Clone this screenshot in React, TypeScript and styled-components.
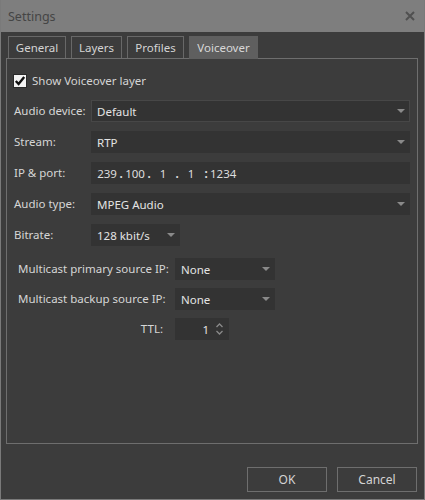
import styled, { createGlobalStyle } from "styled-components";

const GlobalStyle = createGlobalStyle`
    html, body {
        margin: 0;
        padding: 0;
        background: #3c3c3c;
    }
    * {
        box-sizing: border-box;
    }
`;

const Window = styled.div`
    width: 425px;
    height: 500px;
    display: flex;
    flex-direction: column;
    background: #3c3c3c;
    border: 1px solid #7a7a7a;
    border-top: none;
    font-family: "Noto Sans", "Open Sans", sans-serif;
    font-size: 11.5px;
    color: #d4d4d4;
`;

const TitleBar = styled.div`
    height: 32px;
    flex-shrink: 0;
    display: flex;
    align-items: center;
    justify-content: space-between;
    padding: 0 8px 0 7px;
    background: #7e7e7e;
    color: #454545;
    font-size: 12.5px;
`;

const CloseButton = styled.svg`
    width: 10px;
    height: 10px;
    margin-right: 1px;
`;

const Body = styled.div`
    flex: 1;
    display: flex;
    flex-direction: column;
    padding: 4px 5px 0 5px;
`;

const TabStrip = styled.div`
    display: flex;
    gap: 5px;
    padding-left: 2px;
    height: 22px;
    position: relative;
    z-index: 1;
`;

const Tab = styled.div<{ $active?: boolean; $width: number }>`
    height: ${(p) => (p.$active ? "23px" : "22px")};
    display: flex;
    align-items: center;
    justify-content: center;
    width: ${(p) => p.$width}px;
    background: ${(p) => (p.$active ? "#5f5f5f" : "#3c3c3c")};
    border: ${(p) => (p.$active ? "none" : "1px solid #686868")};
    border-bottom: none;
    color: ${(p) => (p.$active ? "#d8d8d8" : "#d4d4d4")};
`;

const Pane = styled.div`
    height: 386px;
    margin-right: 1px;
    border: 1px solid #6e6e6e;
    padding: 15px 7px 0 7px;
    display: flex;
    flex-direction: column;
`;

const CheckRow = styled.label`
    display: flex;
    align-items: center;
    gap: 5px;
    margin-left: -1px;
    height: 13px;
    margin-bottom: 13px;
`;

const CheckBox = styled.span`
    width: 14px;
    height: 14px;
    background: #f4f4f4;
    border: 1px solid #2a2a2a;
    display: flex;
    align-items: center;
    justify-content: center;
`;

const Form = styled.div<{ $label: number; $gap: number; $indent: number }>`
    display: grid;
    grid-template-columns: ${(p) => p.$label}px 1fr;
    row-gap: ${(p) => p.$gap}px;
    padding-left: ${(p) => p.$indent}px;
    align-items: center;
`;

const Label = styled.span<{ $right?: boolean }>`
    justify-self: ${(p) => (p.$right ? "end" : "start")};
    margin-right: ${(p) => (p.$right ? "12px" : "0")};
    white-space: nowrap;
    color: #d6d6d6;
    margin-top: -2px;
`;

const Combo = styled.div<{ $width?: number; $focused?: boolean }>`
    height: 22px;
    width: ${(p) => (p.$width ? `${p.$width}px` : "auto")};
    display: flex;
    align-items: center;
    justify-content: space-between;
    padding: 0 5px 0 5px;
    background: #333333;
    border: 1px solid ${(p) => (p.$focused ? "#474747" : "#333333")};
    color: #e4e4e4;
`;

const Arrow = styled.span`
    width: 0;
    height: 0;
    border-left: 4px solid transparent;
    border-right: 4px solid transparent;
    border-top: 4px solid #8a8a8a;
    margin-right: -1px;
`;

const AddressField = styled.div`
    height: 22px;
    display: flex;
    align-items: center;
    padding-left: 5px;
    background: #333333;
    color: #dedede;
`;

const Octet = styled.span`
    width: 22px;
    text-align: center;
`;

const Separator = styled.span<{ $width: number }>`
    width: ${(p) => p.$width}px;
    text-align: center;
    font-weight: 700;
`;

const Group = styled.div`
    margin-top: 12px;
`;

const SpinBox = styled.div`
    width: 54px;
    height: 22px;
    display: flex;
    align-items: center;
    justify-content: flex-end;
    gap: 6px;
    padding-right: 5px;
    background: #333333;
    color: #e4e4e4;
`;

const Footer = styled.div`
    display: flex;
    justify-content: flex-end;
    gap: 10px;
    padding: 23px 2px 0 0;
`;

const Button = styled.button`
    width: 80px;
    height: 25px;
    background: transparent;
    border: 1px solid #6e6e6e;
    color: #d4d4d4;
    font-family: "Noto Sans", "Open Sans", sans-serif;
    font-size: 12px;
    padding: 0;
`;

const tabs = [
    { name: "General", width: 58 },
    { name: "Layers", width: 51 },
    { name: "Profiles", width: 57 },
    { name: "Voiceover", width: 69, active: true },
];

function Select({ value, width, focused }: { value: string; width?: number; focused?: boolean }) {
    return (
        <Combo $width={width} $focused={focused}>
            <span>{value}</span>
            <Arrow />
        </Combo>
    );
}

function Settings() {
    return (
        <Window>
            <TitleBar>
                <span>Settings</span>
                <CloseButton viewBox="0 0 10 10">
                    <path d="M1 1 L9 9 M9 1 L1 9" stroke="#505050" strokeWidth="2" />
                </CloseButton>
            </TitleBar>
            <Body>
                <TabStrip>
                    {tabs.map((t) => (
                        <Tab key={t.name} $active={t.active} $width={t.width}>
                            {t.name}
                        </Tab>
                    ))}
                </TabStrip>
                <Pane>
                    <CheckRow>
                        <CheckBox>
                            <svg width="12" height="12" viewBox="0 0 12 12">
                                <path d="M1.8 6 L4.6 9 L10.2 2" fill="none" stroke="#111" strokeWidth="2.4" />
                            </svg>
                        </CheckBox>
                        Show Voiceover layer
                    </CheckRow>
                    <Form $label={77} $gap={9} $indent={0}>
                        <Label>Audio device:</Label>
                        <Select value="Default" focused />
                        <Label>Stream:</Label>
                        <Select value="RTP" />
                        <Label>IP &amp; port:</Label>
                        <AddressField>
                            <Octet>239</Octet>
                            <Separator $width={6}>.</Separator>
                            <Octet>100</Octet>
                            <Separator $width={6}>.</Separator>
                            <Octet>1</Octet>
                            <Separator $width={6}>.</Separator>
                            <Octet>1</Octet>
                            <Separator $width={8}>:</Separator>
                            <span>1234</span>
                        </AddressField>
                        <Label>Audio type:</Label>
                        <Select value="MPEG Audio" />
                        <Label>Bitrate:</Label>
                        <Select value="128 kbit/s" width={89} />
                    </Form>
                    <Group>
                        <Form $label={157} $gap={8} $indent={4}>
                            <Label>Multicast primary source IP:</Label>
                            <Select value="None" width={100} />
                            <Label>Multicast backup source IP:</Label>
                            <Select value="None" width={100} />
                            <Label $right>TTL:</Label>
                            <SpinBox>
                                <span>1</span>
                                <svg width="9" height="14" viewBox="0 0 9 14">
                                    <path d="M1.5 5 L4.5 2 L7.5 5" fill="none" stroke="#8a8a8a" strokeWidth="1.3" />
                                    <path d="M1.5 9 L4.5 12 L7.5 9" fill="none" stroke="#8a8a8a" strokeWidth="1.3" />
                                </svg>
                            </SpinBox>
                        </Form>
                    </Group>
                </Pane>
                <Footer>
                    <Button>OK</Button>
                    <Button>Cancel</Button>
                </Footer>
            </Body>
        </Window>
    );
}

export default function App() {
    return (
        <>
            <GlobalStyle />
            <Settings />
        </>
    );
}
